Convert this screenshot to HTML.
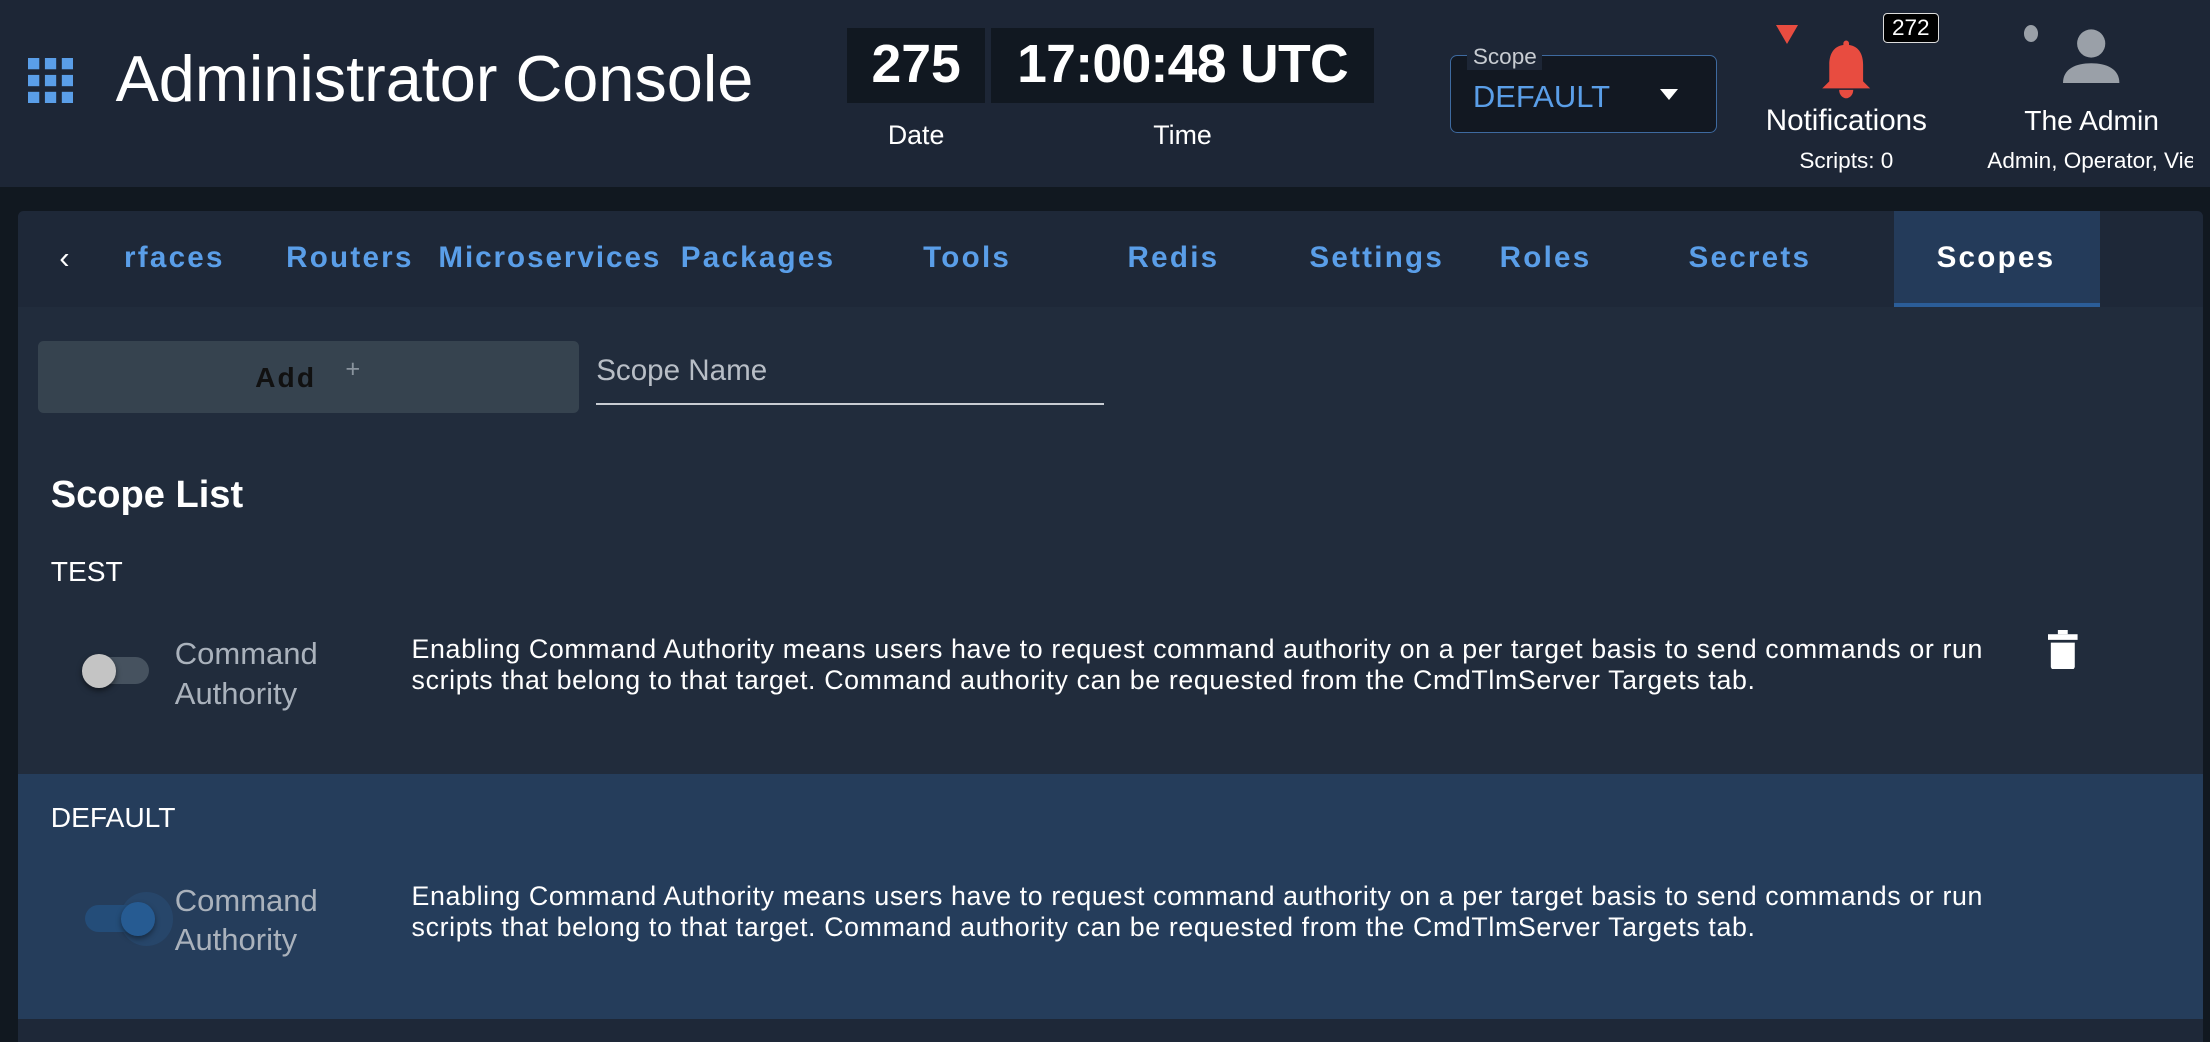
<!DOCTYPE html>
<html><head><meta charset="utf-8"><style>
html,body{margin:0;padding:0;background:#111820;overflow:hidden}
body{width:2210px;height:1042px}
#r{zoom:1.40944;width:1568px;height:740px;position:relative;font-family:"Liberation Sans",Roboto,sans-serif;color:#fff;overflow:hidden}
.a{position:absolute;white-space:nowrap}
.hdr{left:0;top:0;width:1568px;height:133px;background:#1d2636}
.box{background:#111821}
.tab{top:171px;font-size:21px;letter-spacing:1.6px;color:#5a9ee8;font-weight:bold}
.desc{font-size:19px;line-height:22px;color:#fff;letter-spacing:0.45px}
.ca{font-size:22px;line-height:28px;color:#aab2bc}
</style></head><body><div id="r">
<div class="a hdr"></div>
<svg class="a" style="left:20px;top:41px" width="32" height="32" viewBox="0 0 32 32" fill="#5a9ee8">
<rect x="0" y="0" width="8" height="8"/><rect x="12" y="0" width="8" height="8"/><rect x="24" y="0" width="8" height="8"/>
<rect x="0" y="12" width="8" height="8"/><rect x="12" y="12" width="8" height="8"/><rect x="24" y="12" width="8" height="8"/>
<rect x="0" y="24" width="8" height="8"/><rect x="12" y="24" width="8" height="8"/><rect x="24" y="24" width="8" height="8"/></svg>
<div class="a" style="left:82px;top:29px;font-size:46px">Administrator Console</div>
<div class="a box" style="left:601px;top:20px;width:98px;height:53px"></div>
<div class="a box" style="left:703px;top:20px;width:272px;height:53px"></div>
<div class="a" style="left:601px;width:98px;text-align:center;top:24px;font-size:38px;font-weight:bold">275</div>
<div class="a" style="left:703px;width:272px;text-align:center;top:24px;font-size:38px;font-weight:bold;letter-spacing:-0.5px">17:00:48 UTC</div>
<div class="a" style="left:601px;width:98px;text-align:center;top:85px;font-size:19px">Date</div>
<div class="a" style="left:703px;width:272px;text-align:center;top:85px;font-size:19px">Time</div>
<div class="a" style="left:1029px;top:39px;width:188px;height:54px;border:1px solid #3e6aa0;border-radius:5px;background:#121822"></div>
<div class="a" style="left:1041px;top:31px;padding:0 4px;background:#1d2636;font-size:16px;color:#c8ccd2">Scope</div>
<div class="a" style="left:1045px;top:56px;font-size:22px;color:#5a9ee8">DEFAULT</div>
<div class="a" style="left:1178px;top:63px;width:0;height:0;border-left:7px solid transparent;border-right:7px solid transparent;border-top:8px solid #fff"></div>
<div class="a" style="left:1260px;top:18px;width:0;height:0;border-left:8px solid transparent;border-right:8px solid transparent;border-top:14px solid #e84c40"></div>
<svg class="a" style="left:1290px;top:18px" width="40" height="52" viewBox="0 0 40 52" fill="#e84c40">
<rect x="18" y="11" width="4" height="6" rx="2"/><path d="M20 14c-9 0-12 7-12 14v12l-5 5h34l-5-5V28c0-7-3-14-12-14z"/><path d="M15 46h10c0 4-3 6-5 6s-5-2-5-6z"/></svg>
<div class="a" style="left:1336px;top:9px;width:38px;height:20px;background:#000;border:1px solid #ddd;border-radius:3px;font-size:16px;text-align:center;line-height:20px">272</div>
<div class="a" style="left:1200px;width:220px;text-align:center;top:74px;font-size:21px">Notifications</div>
<div class="a" style="left:1200px;width:220px;text-align:center;top:105px;font-size:16px">Scripts: 0</div>
<div class="a" style="left:1436px;top:18px;width:10px;height:12px;border-radius:50%;background:#9aa0a8"></div>
<svg class="a" style="left:1464px;top:20px" width="40" height="40" viewBox="0 0 40 40" fill="#9aa0a8"><circle cx="20" cy="11" r="10"/><path d="M0 39c0-10 9-14 20-14s20 4 20 14z"/></svg>
<div class="a" style="left:1384px;width:200px;text-align:center;top:74px;font-size:20px">The Admin</div>
<div class="a" style="left:1410px;width:146px;overflow:hidden;top:105px;font-size:16px">Admin, Operator, Viewer</div>

<div class="a" style="left:13px;top:150px;width:1550px;height:600px;background:#1e2838;border-radius:4px 4px 0 0"></div>
<div class="a" style="left:13px;top:218px;width:1550px;height:505px;background:#212c3c"></div>
<div class="a" style="left:1344px;top:150px;width:146px;height:68px;background:#243b5a"></div>
<div class="a" style="left:1344px;top:215px;width:146px;height:3px;background:#2b5d98"></div>
<div class="a" style="left:42px;top:170px;font-size:22px;color:#fff">&#8249;</div>
<div class="a tab" style="left:88px">rfaces</div>
<div class="a tab" style="left:203px">Routers</div>
<div class="a tab" style="left:311px;letter-spacing:1.4px">Microservices</div>
<div class="a tab" style="left:483px">Packages</div>
<div class="a tab" style="left:655px">Tools</div>
<div class="a tab" style="left:800px">Redis</div>
<div class="a tab" style="left:929px">Settings</div>
<div class="a tab" style="left:1064px">Roles</div>
<div class="a tab" style="left:1198px">Secrets</div>
<div class="a tab" style="left:1374px;color:#fff">Scopes</div>

<div class="a" style="left:27px;top:242px;width:384px;height:51px;background:#36434f;border-radius:4px"></div>
<div class="a" style="left:181px;top:256px;font-size:20px;color:#111;letter-spacing:1.5px;font-weight:bold">Add</div>
<div class="a" style="left:245px;top:252px;font-size:18px;color:#8a949e">+</div>
<div class="a" style="left:423px;top:251px;font-size:21px;color:#b8bec6">Scope Name</div>
<div class="a" style="left:423px;top:286px;width:360px;height:1px;background:#c8ccd2"></div>

<div class="a" style="left:36px;top:336px;font-size:27px;font-weight:bold">Scope List</div>
<div class="a" style="left:36px;top:394px;font-size:20px">TEST</div>
<div class="a" style="left:60px;top:466px;width:46px;height:19px;border-radius:10px;background:#46525f"></div>
<div class="a" style="left:58px;top:464px;width:24px;height:24px;border-radius:50%;background:#c4c4c4;box-shadow:0 2px 4px rgba(0,0,0,.5)"></div>
<div class="a ca" style="left:124px;top:450px">Command<br>Authority</div>
<div class="a desc" style="left:292px;top:450px">Enabling Command Authority means users have to request command authority on a per target basis to send commands or run<br>scripts that belong to that target. Command authority can be requested from the CmdTlmServer Targets tab.</div>
<svg class="a" style="left:1453px;top:447px" width="21" height="28" viewBox="0 0 21 28" fill="#fff"><rect x="7" y="0" width="7" height="3"/><rect x="0" y="3" width="21" height="4"/><path d="M2 9h17v17a2 2 0 0 1-2 2H4a2 2 0 0 1-2-2z"/></svg>

<div class="a" style="left:13px;top:549px;width:1550px;height:174px;background:#253d5b"></div>
<div class="a" style="left:36px;top:568px;font-size:20px">DEFAULT</div>
<div class="a" style="left:85px;top:633px;width:38px;height:38px;border-radius:50%;background:#27466a"></div>
<div class="a" style="left:60px;top:642px;width:46px;height:19px;border-radius:10px;background:#244d79"></div>
<div class="a" style="left:86px;top:640px;width:24px;height:24px;border-radius:50%;background:#265b92;box-shadow:0 2px 4px rgba(0,0,0,.4)"></div>
<div class="a ca" style="left:124px;top:625px">Command<br>Authority</div>
<div class="a desc" style="left:292px;top:625px">Enabling Command Authority means users have to request command authority on a per target basis to send commands or run<br>scripts that belong to that target. Command authority can be requested from the CmdTlmServer Targets tab.</div>
</div></body></html>
